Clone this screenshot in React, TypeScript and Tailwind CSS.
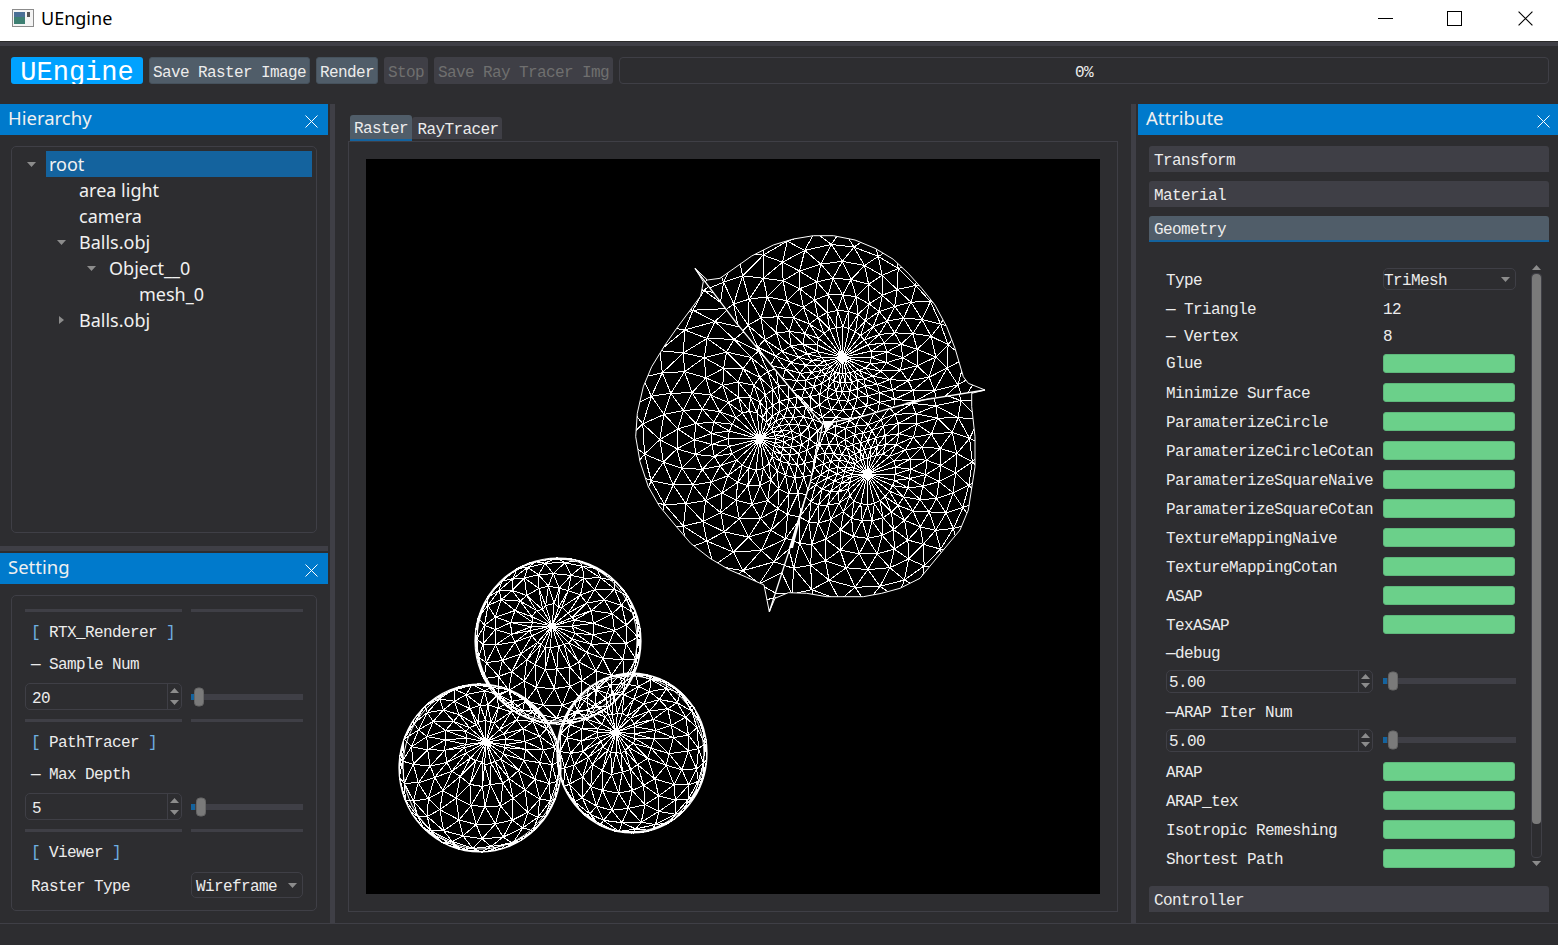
import React from 'react';

type Pt = [number, number];

// wireframe helpers: the picture is a software-rendered mesh, so it is generated instead of listed
const rng = (seed: number) => () => {
  seed = (seed * 16807) % 2147483647;
  return seed / 2147483647 - 0.5;
};

const z = (x: number, y: number): Pt => [x / 3 + 620, y / 3 + 220];
const zl = (list: number[][]) => list.map(([x, y]) => z(x, y));

const spikeA = [225, 145];
const spikeB = [1095, 510];
const spikeC = [448, 1175];
const hub = [608, 612];

const arcTop = [spikeA, [262, 180], [300, 175], [395, 108], [460, 75], [520, 57], [580, 47], [640, 47], [705, 60], [765, 85], [820, 118], [865, 160], [905, 205], [945, 255], [980, 320], [1005, 385], [1030, 470], [1045, 490], spikeB];
const arcRight = [spikeB, [1055, 520], [1055, 560], [1065, 650], [1065, 740], [1045, 870], [1020, 930], [970, 990], [900, 1075], [840, 1105], [785, 1120], [730, 1130], [620, 1130], [560, 1120], [505, 1118], [465, 1135], spikeC];
const arcLeft = [spikeC, [432, 1095], [380, 1072], [325, 1048], [270, 1015], [212, 970], [165, 915], [118, 858], [85, 800], [60, 725], [47, 650], [52, 580], [70, 500], [95, 440], [135, 375], [170, 325], [207, 275], [242, 228], [250, 185], spikeA];
const seamA = [spikeA, [350, 310], [520, 515], [570, 570], hub];
const seamB = [spikeB, [880, 545], [725, 590], hub];
const seamC = [spikeC, [505, 1000], [570, 790], hub];

const seg = (a: Pt, b: Pt) => `M${a[0].toFixed(1)} ${a[1].toFixed(1)}L${b[0].toFixed(1)} ${b[1].toFixed(1)}`;

const rayLength = (poly: Pt[], pole: Pt, th: number) => {
  const dx = Math.cos(th);
  const dy = Math.sin(th);
  let best = 0;
  poly.forEach((a, i) => {
    const b = poly[(i + 1) % poly.length];
    const ex = b[0] - a[0];
    const ey = b[1] - a[1];
    const det = dx * ey - dy * ex;
    if (Math.abs(det) < 1e-6) return;
    const t = ((a[0] - pole[0]) * ey - (a[1] - pole[1]) * ex) / det;
    const u = ((a[0] - pole[0]) * dy - (a[1] - pole[1]) * dx) / det;
    if (t > 0 && u >= 0 && u <= 1 && t > best) best = t;
  });
  return best;
};

const region = (poly: Pt[], pole: Pt, n: number, cap: number, seed: number) => {
  const rand = rng(seed);
  const rings = [0.26, 0.4, 0.54, 0.68, 0.82, 0.96, 1.1, 1.25, 1.4, 1.55, 1.7];
  let reach = Array.from({ length: n }, (_, j) => Math.min(rayLength(poly, pole, (j / n) * Math.PI * 2), cap));
  for (let pass = 0; pass < 2; pass++) {
    reach = reach.map((r, j) => (reach[(j + n - 1) % n] + r * 2 + reach[(j + 1) % n]) / 4);
  }
  const pts = rings.map((t, i) =>
    Array.from({ length: n }, (_, j) => {
      const th = ((j + (i % 2) * 0.5) / n) * Math.PI * 2;
      const r = t * (i % 2 ? (reach[j] + reach[(j + 1) % n]) / 2 : reach[j]);
      const k = 3 * Math.min(t, 1);
      return [pole[0] + Math.cos(th) * r + rand() * k, pole[1] + Math.sin(th) * r + rand() * k] as Pt;
    })
  );
  let d = '';
  for (let j = 0; j < n; j++) {
    d += seg(pole, pts[0][j]);
    pts.forEach((ring, i) => {
      d += seg(ring[j], ring[(j + 1) % n]);
      if (i < pts.length - 1) {
        const next = pts[i + 1];
        if (i % 2) {
          d += seg(ring[j], next[j]) + seg(ring[j], next[(j + 1) % n]);
        } else {
          d += seg(ring[j], next[j]) + seg(ring[j], next[(j + n - 1) % n]);
        }
      }
    });
  }
  return d;
};

const sphere = (cx: number, cy: number, rx: number, ry: number, px: number, py: number, seed: number) => {
  const rand = rng(seed);
  const nx = (px - cx) / rx;
  const ny = (py - cy) / ry;
  const nz = Math.sqrt(1 - nx * nx - ny * ny);
  const ul = Math.hypot(nz, nx);
  const u = [nz / ul, 0, -nx / ul];
  const v = [ny * u[2], nz * u[0] - nx * u[2], -ny * u[0]];
  const lats = 9;
  const lons = 24;
  const grid = Array.from({ length: lats + 1 }, (_, i) => {
    const phi = (Math.PI * (i + 1)) / (lats + 3);
    return Array.from({ length: lons }, (_, j) => {
      const lam = ((j + (i % 2) * 0.5) / lons) * Math.PI * 2;
      const a = Math.cos(lam);
      const b = Math.sin(lam);
      const s = Math.sin(phi);
      const c = Math.cos(phi);
      return [
        nx * c + s * (u[0] * a + v[0] * b) + rand() * 0.045,
        ny * c + s * (u[1] * a + v[1] * b) + rand() * 0.045,
        nz * c + s * (u[2] * a + v[2] * b),
      ];
    });
  });
  const map = (p: number[]): Pt => {
    const l = Math.hypot(p[0], p[1]);
    const f = l > 0.99 ? 0.99 / l : 1;
    return [cx + p[0] * f * rx, cy + p[1] * f * ry];
  };
  const limit = -0.3;
  let d = '';
  const line = (a: number[], b: number[]) => {
    if (a[2] > limit && b[2] > limit) d += seg(map(a), map(b));
  };
  for (let j = 0; j < lons; j++) {
    d += seg([px, py], map(grid[0][j]));
    grid.forEach((ring, i) => {
      line(ring[j], ring[(j + 1) % lons]);
      if (i < lats) {
        const next = grid[i + 1];
        line(ring[j], next[j]);
        line(ring[j], next[i % 2 ? (j + 1) % lons : (j + lons - 1) % lons]);
      }
    });
  }
  return d;
};

const polyOf = (...parts: number[][][]) => zl(parts.flat());

const blobParts = [
  { id: 'mesh-top', poly: polyOf(arcTop, seamB.slice(1), [...seamA].reverse().slice(1)), pole: z(668, 412), n: 28, cap: 118, seed: 11 },
  { id: 'mesh-left', poly: polyOf(arcLeft, seamA.slice(1), [...seamC].reverse().slice(1)), pole: z(420, 657), n: 26, cap: 122, seed: 23 },
  { id: 'mesh-right', poly: polyOf(arcRight, seamC.slice(1), [...seamB].reverse().slice(1)), pole: z(742, 762), n: 28, cap: 118, seed: 37 },
];

const sphereMesh = sphere(558, 641, 84, 84, 552, 626, 41) + sphere(480, 768, 82, 85, 486, 742, 53) + sphere(632, 753, 76, 81, 616, 732, 67);

const toD = (list: number[][]) => zl(list).map((p, i) => `${i ? 'L' : 'M'}${p[0].toFixed(1)} ${p[1].toFixed(1)}`).join('');

function Wireframe() {
  return (
    <svg viewBox="366 159 734 735" className="block h-[735px] w-[734px] bg-black">
      <defs>
        {blobParts.map((part) => (
          <clipPath key={part.id} id={part.id}>
            <polygon points={part.poly.map((p) => p.join(',')).join(' ')} />
          </clipPath>
        ))}
      </defs>
      {blobParts.map((part) => (
        <path
          key={part.id}
          d={region(part.poly, part.pole, part.n, part.cap, part.seed)}
          clipPath={`url(#${part.id})`}
          fill="none"
          stroke="#fff"
          strokeWidth={1}
          shapeRendering="crispEdges"
        />
      ))}
      <path d={toD(arcTop) + toD(arcRight) + toD(arcLeft)} fill="none" stroke="#fff" strokeWidth={1} />
      <path d={toD(seamA) + toD(seamB) + toD(seamC)} fill="none" stroke="#fff" strokeWidth={1.3} />
      <polygon points="822,421 835,421 827,431" fill="#fff" />
      <polygon points="905,403 935,397 915,403" fill="#fff" />
      <polygon points="789,548 809,484 793,548" fill="#fff" />
      <path d={sphereMesh} fill="none" stroke="#fff" strokeWidth={1} shapeRendering="crispEdges" />
      <ellipse cx={558} cy={641} rx={83} ry={83} fill="none" stroke="#fff" strokeWidth={1.2} />
      <ellipse cx={557} cy={640} rx={80} ry={81} fill="none" stroke="#fff" strokeWidth={1} />
      <ellipse cx={480} cy={768} rx={81} ry={84} fill="none" stroke="#fff" strokeWidth={1.2} />
      <ellipse cx={481} cy={767} rx={78} ry={82} fill="none" stroke="#fff" strokeWidth={1} />
      <ellipse cx={632} cy={753} rx={75} ry={80} fill="none" stroke="#fff" strokeWidth={1.2} />
      <ellipse cx={631} cy={754} rx={73} ry={78} fill="none" stroke="#fff" strokeWidth={1} />
    </svg>
  );
}

const monoFont = "font-['Liberation_Mono',monospace] text-[16px] tracking-[-0.6px] text-[#ececec]";
const mono = `${monoFont} pt-[4px]`;
const ui = "font-['Noto_Sans',sans-serif]";

function Caret({ up = false, right = false }: { up?: boolean; right?: boolean }) {
  const points = right ? '1,0 6,4 1,8' : up ? '0,5 4.5,0 9,5' : '0,0 9,0 4.5,5';
  return (
    <svg width={right ? 7 : 9} height={right ? 8 : 5} viewBox={right ? '0 0 7 8' : '0 0 9 5'} className="block shrink-0">
      <polygon points={points} fill="#8c8c8c" />
    </svg>
  );
}

function Cross({ size = 13, color = '#fff' }: { size?: number; color?: string }) {
  return (
    <svg width={size} height={size} viewBox="0 0 13 13" className="block">
      <path d="M0.5 0.5L12.5 12.5M12.5 0.5L0.5 12.5" stroke={color} strokeWidth={1} />
    </svg>
  );
}

function DockHeader({ title, inset = 'pr-[10px]' }: { title: string; inset?: string }) {
  return (
    <div className={`flex h-[31px] shrink-0 items-center justify-between bg-[#007acc] pl-2 ${inset}`}>
      <span className={`${ui} pb-[2px] text-[18.5px] leading-none text-[#f0f0f0]`}>{title}</span>
      <span className="mt-[4px]">
        <Cross />
      </span>
    </div>
  );
}

function ToolButton({ label, className = '', disabled = false }: { label: string; className?: string; disabled?: boolean }) {
  return (
    <div
      className={`flex h-[27px] items-center justify-center rounded-[3px] pt-[4px] font-['Liberation_Mono',monospace] text-[16px] tracking-[-0.6px] ${
        disabled ? 'bg-[#3f3f46] text-[#6f6f6f]' : 'border border-[#46525d] bg-[#505d69] text-[#ececec]'
      } ${className}`}
    >
      {label}
    </div>
  );
}

function TreeRow({ indent, label, caret, selected = false }: { indent: number; label: string; caret?: 'down' | 'right'; selected?: boolean }) {
  return (
    <div className="flex h-[26px] items-center" style={{ paddingLeft: indent }}>
      <span className="flex w-[29px] shrink-0 justify-center">
        {caret === 'down' && <Caret />}
        {caret === 'right' && <Caret right />}
      </span>
      <span className={`${ui} flex h-[26px] flex-1 items-center pl-[3px] text-[18px] leading-none text-[#f1f1f1] ${selected ? 'bg-[#14639e]' : ''}`}>
        {label}
      </span>
    </div>
  );
}

function Rule() {
  return (
    <div className="flex h-[3px] gap-[9px]">
      <div className="w-[157px] bg-[#3f3f46]" />
      <div className="w-[112px] bg-[#3f3f46]" />
    </div>
  );
}

function Spin({ value, className = '', inset = 'pl-[6px]' }: { value: string; className?: string; inset?: string }) {
  return (
    <div className={`flex items-stretch rounded-[5px] border border-[#3f3f46] ${className}`}>
      <span className={`${mono} flex flex-1 items-center ${inset}`}>{value}</span>
      <span className="flex w-[14px] flex-col items-center justify-around border-l border-[#3f3f46] py-[1px]">
        <Caret up />
        <Caret />
      </span>
    </div>
  );
}

function Slider({ pos, thumb = 19, className = '' }: { pos: number; thumb?: number; className?: string }) {
  return (
    <div className={`relative flex h-[6px] items-center bg-[#3f3f46] ${className}`}>
      <div className="h-[6px] w-[4px] bg-[#14639e]" />
      <div className="absolute top-1/2 w-[10px] -translate-y-1/2 rounded-[4px] border border-[#666] bg-[#7a7a7a]" style={{ left: pos, height: thumb }} />
    </div>
  );
}

function Combo({ value, className = '' }: { value: string; className?: string }) {
  return (
    <div className={`flex items-center justify-between rounded-[5px] border border-[#3f3f46] pr-[5px] ${className}`}>
      <span className={mono}>{value}</span>
      <Caret />
    </div>
  );
}

function Section({ label, active = false }: { label: string; active?: boolean }) {
  return (
    <div
      className={`${mono} flex h-[26px] items-center rounded-t-[3px] pl-[5px] ${
        active ? 'border-b-2 border-[#14639e] bg-[#505d69]' : 'bg-[#3f3f46]'
      }`}
    >
      {label}
    </div>
  );
}

function AttrRow({ label, height = 29, children, className = '', textPad = 'pt-[4px]' }: { label: string; height?: number; children?: React.ReactNode; className?: string; textPad?: string }) {
  return (
    <div className={`flex items-center ${className}`} style={{ height }}>
      <span className={`${monoFont} ${textPad} w-[217px] shrink-0 whitespace-pre`}>{label}</span>
      {children}
    </div>
  );
}

function GreenRow({ label, height = 29, className = '' }: { label: string; height?: number; className?: string }) {
  return (
    <AttrRow label={label} height={height} className={className} textPad="pt-[2px]">
      <div className="h-[19px] w-[132px] rounded-[3px] border border-[#5fb87c] bg-[#6bd08a]" />
    </AttrRow>
  );
}

function WindowIcon() {
  return (
    <svg width={22} height={18} viewBox="0 0 22 18" className="block">
      <rect x={0.5} y={0.5} width={21} height={17} fill="#f4f4f4" stroke="#8b8b8b" />
      <rect x={2} y={3} width={11} height={12} fill="#3d7f72" />
      <rect x={2} y={3} width={11} height={5} fill="#4a6f95" />
      <rect x={15} y={3} width={3} height={5} fill="#555" />
    </svg>
  );
}

function GroupTitle({ name }: { name: string }) {
  return (
    <div className={`${monoFont} mt-[10px] h-[20px] whitespace-pre pl-[6px] pt-[1px] leading-[20px]`}>
      <span className="text-[#6fb0e0]">[</span>
      {` ${name} `}
      <span className="text-[#6fb0e0]">]</span>
    </div>
  );
}

const greenTop = ['Minimize Surface', 'ParamaterizeCircle', 'ParamaterizeCircleCotan', 'ParamaterizeSquareNaive', 'ParamaterizeSquareCotan', 'TextureMappingNaive', 'TextureMappingCotan', 'ASAP', 'TexASAP'];

export default function App() {
  return (
    <div className="flex h-[945px] w-[1558px] flex-col overflow-hidden bg-[#2d2d30]">
      {/* window chrome */}
      <div className="flex h-[41px] shrink-0 items-center bg-white pb-[5px] pr-[25px]">
        <div className="ml-[12px] mr-[7px]">
          <WindowIcon />
        </div>
        <span className={`${ui} flex-1 text-[18px] leading-none text-black`}>UEngine</span>
        <span className="block h-[1px] w-[15px] bg-black" />
        <span className="ml-[54px] block h-[15px] w-[15px] border border-black" />
        <span className="ml-[56px]">
          <Cross size={15} color="#000" />
        </span>
      </div>
      <div className="h-[1px] shrink-0 bg-[#2a2a2a]" />
      <div className="h-[4px] shrink-0 bg-[#3f3f46]" />

      {/* toolbar */}
      <div className="mt-[11px] flex shrink-0 items-center gap-[6px] px-[11px] pr-[9px]">
        <div className="flex h-[27px] w-[132px] items-center justify-center overflow-hidden rounded-[3px] bg-[#00a2ff] pt-[6px] font-['Liberation_Mono',monospace] text-[27px] leading-none text-white">
          UEngine
        </div>
        <ToolButton label="Save Raster Image" className="w-[161px]" />
        <ToolButton label="Render" className="w-[62px]" />
        <ToolButton label="Stop" disabled className="w-[44px]" />
        <ToolButton label="Save Ray Tracer Img" disabled className="w-[179px]" />
        <div className={`${mono} flex h-[27px] flex-1 items-center justify-center rounded-[4px] border border-[#3f3f46]`}>0%</div>
      </div>

      {/* docks */}
      <div className="mt-[20px] flex min-h-0 flex-1">
        <div className="flex w-[328px] shrink-0 flex-col">
          <DockHeader title="Hierarchy" />
          <div className="mx-[11px] mt-[11px] h-[387px] rounded-[5px] border border-[#3f3f46] py-[4px] pl-[5px] pr-[4px]">
            <TreeRow indent={0} label="root" caret="down" selected />
            <TreeRow indent={30} label="area light" />
            <TreeRow indent={30} label="camera" />
            <TreeRow indent={30} label="Balls.obj" caret="down" />
            <TreeRow indent={60} label="Object__0" caret="down" />
            <TreeRow indent={90} label="mesh_0" />
            <TreeRow indent={30} label="Balls.obj" caret="right" />
          </div>
          <div className="mt-[13px] h-[5px] bg-[#3f3f46]" />
          <div className="mt-[2px]">
            <DockHeader title="Setting" />
          </div>
          <div className="mx-[11px] mt-[11px] h-[316px] rounded-[5px] border border-[#3f3f46] px-[13px] pt-[13px]">
            <Rule />
            <GroupTitle name="RTX_Renderer" />
            <div className={`${mono} mt-[11px] flex h-[20px] items-center whitespace-pre pl-[6px]`}>— Sample Num</div>
            <div className="mt-[10px] flex items-center gap-[9px]">
              <Spin value="20" className="h-[27px] w-[157px]" />
              <Slider pos={3} className="w-[112px]" />
            </div>
            <div className="mt-[9px]">
              <Rule />
            </div>
            <GroupTitle name="PathTracer" />
            <div className={`${mono} mt-[11px] flex h-[20px] items-center whitespace-pre pl-[6px]`}>— Max Depth</div>
            <div className="mt-[10px] flex items-center gap-[9px]">
              <Spin value="5" className="h-[27px] w-[157px]" />
              <Slider pos={5} className="w-[112px]" />
            </div>
            <div className="mt-[9px]">
              <Rule />
            </div>
            <GroupTitle name="Viewer" />
            <div className="mt-[10px] flex h-[26px] items-center">
              <span className={`${mono} w-[166px] shrink-0 pl-[6px]`}>Raster Type</span>
              <Combo value="Wireframe" className="h-[26px] w-[112px] pl-[4px]" />
            </div>
          </div>
        </div>

        <div className="ml-[2px] w-[5px] shrink-0 bg-[#3f3f46]" />

        {/* center */}
        <div className="ml-[13px] flex w-[770px] shrink-0 flex-col">
          <div className="mt-[11px] flex h-[26px] items-end pl-[2px]">
            <div className={`${mono} flex h-[26px] w-[62px] items-center justify-center rounded-t-[3px] border-b-2 border-[#14639e] bg-[#505d69]`}>Raster</div>
            <div className={`${mono} mb-[2px] flex h-[22px] w-[90px] items-center justify-center rounded-t-[3px] bg-[#3f3f46] pl-[2px]`}>RayTracer</div>
          </div>
          <div className="h-[771px] border border-[#3f3f46] pl-[17px] pt-[17px]">
            <Wireframe />
          </div>
        </div>

        <div className="ml-[13px] w-[5px] shrink-0 bg-[#3f3f46]" />

        {/* right */}
        <div className="ml-[2px] flex w-[420px] shrink-0 flex-col">
          <DockHeader title="Attribute" inset="pr-[8px]" />
          <div className="mx-[11px] mt-[11px] w-[400px]">
            <Section label="Transform" />
            <div className="mt-[9px]">
              <Section label="Material" />
            </div>
            <div className="mt-[9px]">
              <Section label="Geometry" active />
            </div>
            <div className="mt-[23px] flex h-[608px]">
              <div className="ml-[17px] w-[350px] shrink-0">
                <AttrRow label="Type" height={28}>
                  <Combo value="TriMesh" className="h-[22px] w-[133px]" />
                </AttrRow>
                <AttrRow label="— Triangle">
                  <span className={mono}>12</span>
                </AttrRow>
                <AttrRow label="— Vertex" height={26}>
                  <span className={mono}>8</span>
                </AttrRow>
                <GreenRow label="Glue" height={30} />
                {greenTop.map((name) => (
                  <GreenRow key={name} label={name} />
                ))}
                <AttrRow label="—debug" height={27} textPad="pt-[2px]" />
                <div className="flex h-[30px] items-center gap-[10px]">
                  <Spin value="5.00" inset="pl-[2px]" className="h-[23px] w-[207px]" />
                  <Slider pos={5} className="w-[133px]" />
                </div>
                <AttrRow label="—ARAP Iter Num" height={30} />
                <div className="flex h-[28px] items-center gap-[10px]">
                  <Spin value="5.00" inset="pl-[2px]" className="h-[23px] w-[207px]" />
                  <Slider pos={5} className="w-[133px]" />
                </div>
                <GreenRow label="ARAP" className="mt-[3px]" />
                <GreenRow label="ARAP_tex" />
                <GreenRow label="Isotropic Remeshing" />
                <GreenRow label="Shortest Path" />
              </div>
              <div className="ml-[15px] flex w-[11px] flex-col items-center">
                <Caret up />
                <div className="mt-[3px] h-[585px] w-[11px] rounded-[4px] border border-[#3f3f46]">
                  <div className="h-[550px] rounded-[4px] bg-[#7a7a7a]" />
                </div>
                <div className="mt-[3px]">
                  <Caret />
                </div>
              </div>
            </div>
            <div className="mt-[13px]">
              <Section label="Controller" />
            </div>
          </div>
        </div>
      </div>

      {/* status bar */}
      <div className="h-[22px] shrink-0 border-t border-[#3f3f46] bg-[#2d2d30]" />
    </div>
  );
}
